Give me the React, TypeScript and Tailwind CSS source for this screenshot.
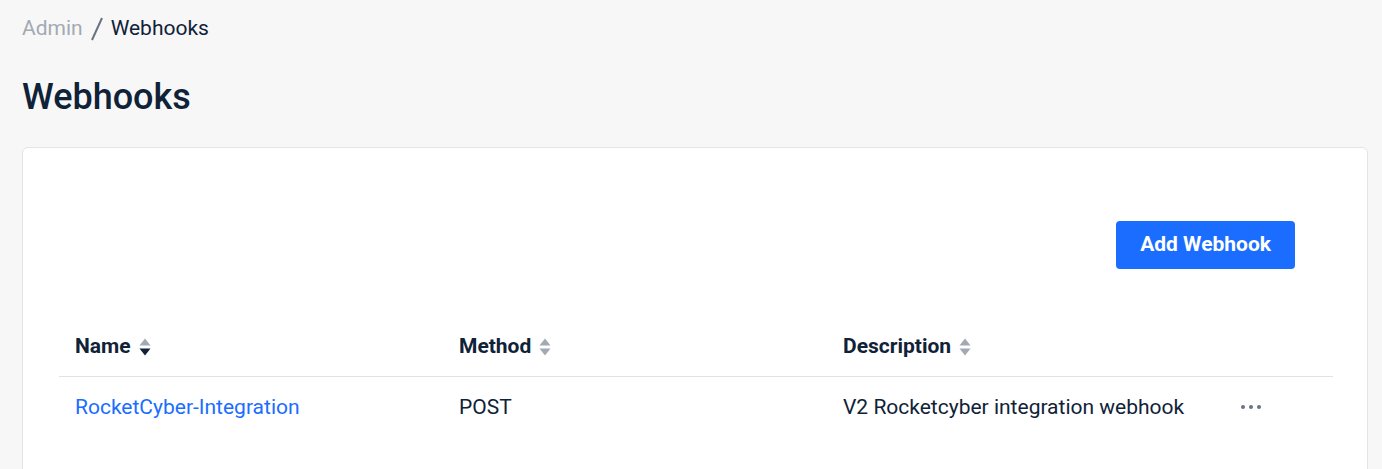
function SortIcon({ active }: { active?: 'asc' | 'desc' }) {
  return (
    <svg width="12" height="24" viewBox="0 0 12 24" className="ml-2">
      <path d="M0.5 10.5 L6 3.5 L11.5 10.5 Z" fill={active === 'asc' ? '#0f2237' : '#a3a9b3'} />
      <path d="M0.5 13.5 L6 20.5 L11.5 13.5 Z" fill={active === 'desc' ? '#0f2237' : '#a3a9b3'} />
    </svg>
  );
}

const rows = [
  {
    name: 'RocketCyber-Integration',
    method: 'POST',
    description: 'V2 Rocketcyber integration webhook',
  },
];

export default function App() {
  return (
    <div className="min-h-[469px] bg-[#f7f7f7] pl-[22px] pr-[14px] pt-[15px] font-['Roboto',sans-serif] text-[#0f2237]">
      <nav className="flex items-center text-[21px] leading-[27px]">
        <span className="text-[#a3a9b3]">Admin</span>
        <svg width="14" height="26" viewBox="0 0 14 26" className="mx-[7px]">
          <path d="M2 24 L12 2" stroke="#6b7280" strokeWidth="2" />
        </svg>
        <span>Webhooks</span>
      </nav>
      <h1 className="mt-[33px] text-[36px] font-medium leading-[44px]">Webhooks</h1>
      <div className="mt-[28px] rounded-md border border-[#e4e4e4] bg-white pb-10 pl-9 pr-[34px] pt-[73px]">
        <div className="flex justify-end pr-[38px]">
          <button className="h-12 rounded bg-[#1a6dff] px-6 text-[21px] font-bold text-white">
            Add Webhook
          </button>
        </div>
        <table className="mt-[47px] w-full border-collapse text-left text-[21px]">
          <thead>
            <tr className="border-b border-[#e2e2e2]">
              {['Name', 'Method', 'Description'].map((h) => (
                <th key={h} className="h-[60px] w-[384px] px-4 pt-[2px] font-bold">
                  <div className="flex items-center">
                    {h}
                    <SortIcon active={h === 'Name' ? 'desc' : undefined} />
                  </div>
                </th>
              ))}
              <th />
            </tr>
          </thead>
          <tbody>
            {rows.map((r) => (
              <tr key={r.name}>
                <td className="h-[62px] px-4 text-[#1a6dff]">{r.name}</td>
                <td className="px-4">{r.method}</td>
                <td className="whitespace-nowrap px-4">{r.description}</td>
                <td className="px-4">
                  <div className="flex gap-[4px] pl-[14px]">
                    <span className="h-[4px] w-[4px] rounded-full bg-[#6b7280]" />
                    <span className="h-[4px] w-[4px] rounded-full bg-[#6b7280]" />
                    <span className="h-[4px] w-[4px] rounded-full bg-[#6b7280]" />
                  </div>
                </td>
              </tr>
            ))}
          </tbody>
        </table>
      </div>
    </div>
  );
}
